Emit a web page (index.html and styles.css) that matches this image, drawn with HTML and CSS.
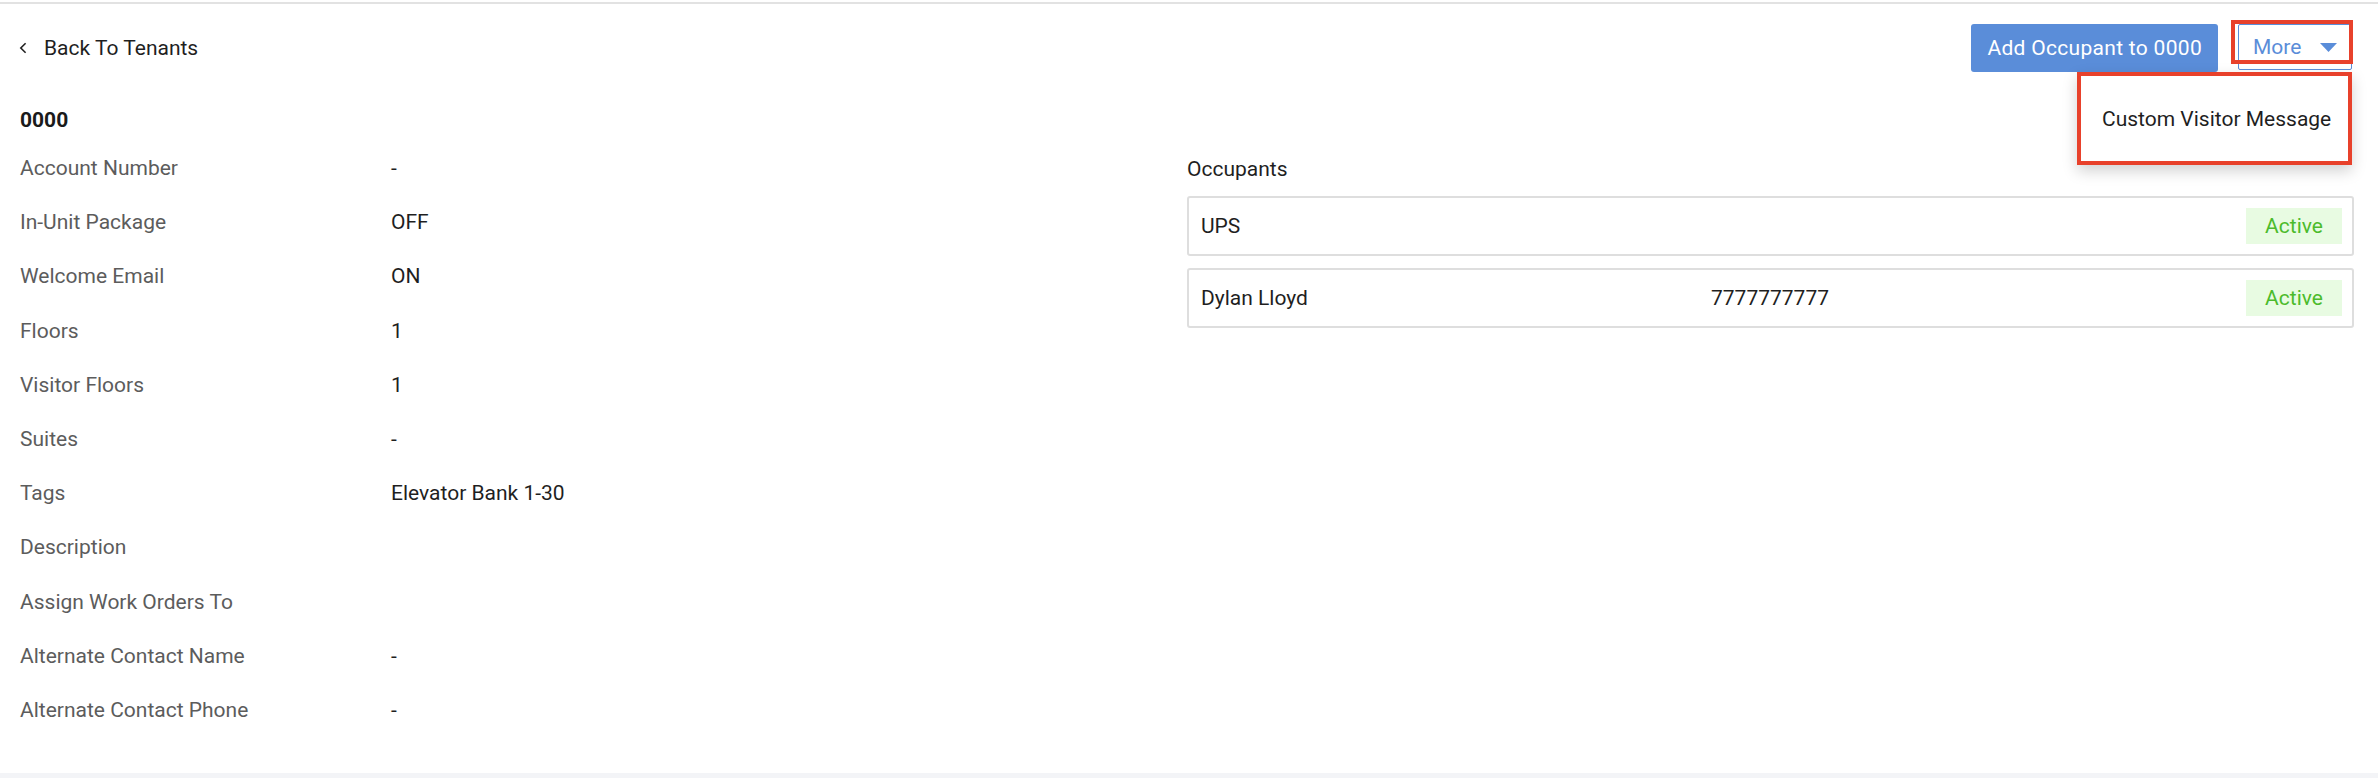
FILE: index.html
```html
<!DOCTYPE html>
<html lang="en">
<head>
<meta charset="utf-8">
<title>Tenant 0000</title>
<link rel="stylesheet" href="styles.css">
</head>
<body>
<div class="page">
  <header class="topbar">
    <a class="back" href="#">
      <svg class="chev" viewBox="0 0 8 12" width="8" height="12"><path d="M6.6 1.2 L1.8 6 L6.6 10.8" fill="none" stroke="#222" stroke-width="1.6"/></svg>
      <span>Back To Tenants</span>
    </a>
    <div class="actions">
      <button class="btn-primary">Add Occupant to 0000</button>
      <div class="more-wrap">
        <button class="btn-more"><span>More</span><svg class="caret" viewBox="0 0 17 9" width="17" height="9"><path d="M0 0 H17 L8.5 9 Z" fill="#5a8dd9"/></svg></button>
        <span class="annot annot-more"></span>
        <div class="menu">
          <div class="menu-item">Custom Visitor Message</div>
        </div>
      </div>
    </div>
  </header>

  <main class="content">
    <h2 class="unit-title">0000</h2>
    <div class="columns">
      <div class="details">
        <div class="row"><span class="label">Account Number</span><span class="value">-</span></div>
        <div class="row"><span class="label">In-Unit Package</span><span class="value">OFF</span></div>
        <div class="row"><span class="label">Welcome Email</span><span class="value">ON</span></div>
        <div class="row"><span class="label">Floors</span><span class="value">1</span></div>
        <div class="row"><span class="label">Visitor Floors</span><span class="value">1</span></div>
        <div class="row"><span class="label">Suites</span><span class="value">-</span></div>
        <div class="row"><span class="label">Tags</span><span class="value">Elevator Bank 1-30</span></div>
        <div class="row"><span class="label">Description</span><span class="value"></span></div>
        <div class="row"><span class="label">Assign Work Orders To</span><span class="value"></span></div>
        <div class="row"><span class="label">Alternate Contact Name</span><span class="value">-</span></div>
        <div class="row"><span class="label">Alternate Contact Phone</span><span class="value">-</span></div>
      </div>
      <section class="occupants">
        <div class="occ-title">Occupants</div>
        <div class="occ-card">
          <span class="occ-name">UPS</span>
          <span class="occ-phone"></span>
          <span class="badge">Active</span>
        </div>
        <div class="occ-card">
          <span class="occ-name">Dylan Lloyd</span>
          <span class="occ-phone">7777777777</span>
          <span class="badge">Active</span>
        </div>
      </section>
    </div>
  </main>
</div>
<div class="foot"></div>
</body>
</html>
```

FILE: styles.css
```css
* { box-sizing: border-box; }

html, body {
  margin: 0;
  background: #ffffff;
}

body {
  height: 778px;
  padding-top: 2px;
  display: flex;
  flex-direction: column;
  font-family: Roboto, "Liberation Sans", Arial, sans-serif;
  font-size: 21px;
  color: #222222;
}

.page {
  flex: 1;
  border-top: 2px solid #e2e2e2;
  background: #ffffff;
}

.foot {
  height: 5px;
  background: #f3f4f7;
}

/* Header */
.topbar {
  display: flex;
  justify-content: space-between;
  align-items: flex-start;
  padding: 20px 26px 0 19px;
}

.back {
  display: flex;
  align-items: center;
  height: 48px;
  color: #1f1f1f;
  text-decoration: none;
}

.chev {
  display: block;
  margin-right: 17px;
}

.actions {
  display: flex;
  align-items: flex-start;
  gap: 20px;
}

.btn-primary {
  height: 48px;
  padding: 0 16px;
  border: none;
  border-radius: 3px;
  background: #5a8dd9;
  color: #ffffff;
  font-family: inherit;
  font-size: 21px;
  letter-spacing: 0.3px;
}

.more-wrap {
  position: relative;
}

.btn-more {
  display: flex;
  align-items: center;
  height: 46px;
  width: 114px;
  padding: 0 14px;
  border: 1.5px solid #5a8dd9;
  border-radius: 2px;
  background: #ffffff;
  color: #5a8dd9;
  font-family: inherit;
  font-size: 21px;
}

.caret {
  display: block;
  margin-left: auto;
}

.annot {
  position: absolute;
  border: 4px solid #e8412b;
  pointer-events: none;
}

.annot-more {
  left: -7px;
  top: -4px;
  width: 122px;
  height: 44px;
}

.menu {
  position: absolute;
  right: 0;
  top: 48px;
  width: 275px;
  height: 93px;
  display: flex;
  align-items: center;
  padding-left: 21px;
  background: #ffffff;
  border: 4px solid #e8412b;
  box-shadow: 0 6px 14px rgba(0, 0, 0, 0.18);
}

.menu-item {
  color: #1f1f1f;
  white-space: nowrap;
}

/* Content */
.content {
  padding: 0 24px 0 20px;
}

.unit-title {
  margin: 28px 0 0;
  font-size: 21px;
  font-weight: 700;
  line-height: 41px;
  color: #1a1a1a;
}

.columns {
  display: grid;
  grid-template-columns: 1fr 1fr;
}

.row {
  display: grid;
  grid-template-columns: 371px 1fr;
  align-items: center;
  height: 54.2px;
}

.label {
  color: #5c5c5c;
}

.value {
  color: #1f1f1f;
}

.occ-title {
  height: 55px;
  display: flex;
  align-items: center;
  color: #1f1f1f;
}

.occ-card {
  display: flex;
  align-items: center;
  height: 60px;
  padding: 0 10px 0 12px;
  border: 2px solid #dedede;
  border-radius: 3px;
  margin-bottom: 12px;
  color: #1f1f1f;
}

.occ-name {
  width: 510px;
}

.occ-phone {
  flex: 1;
}

.badge {
  width: 96px;
  height: 36px;
  display: flex;
  align-items: center;
  justify-content: center;
  background: #e8fbe2;
  color: #4cbb2c;
}
```
